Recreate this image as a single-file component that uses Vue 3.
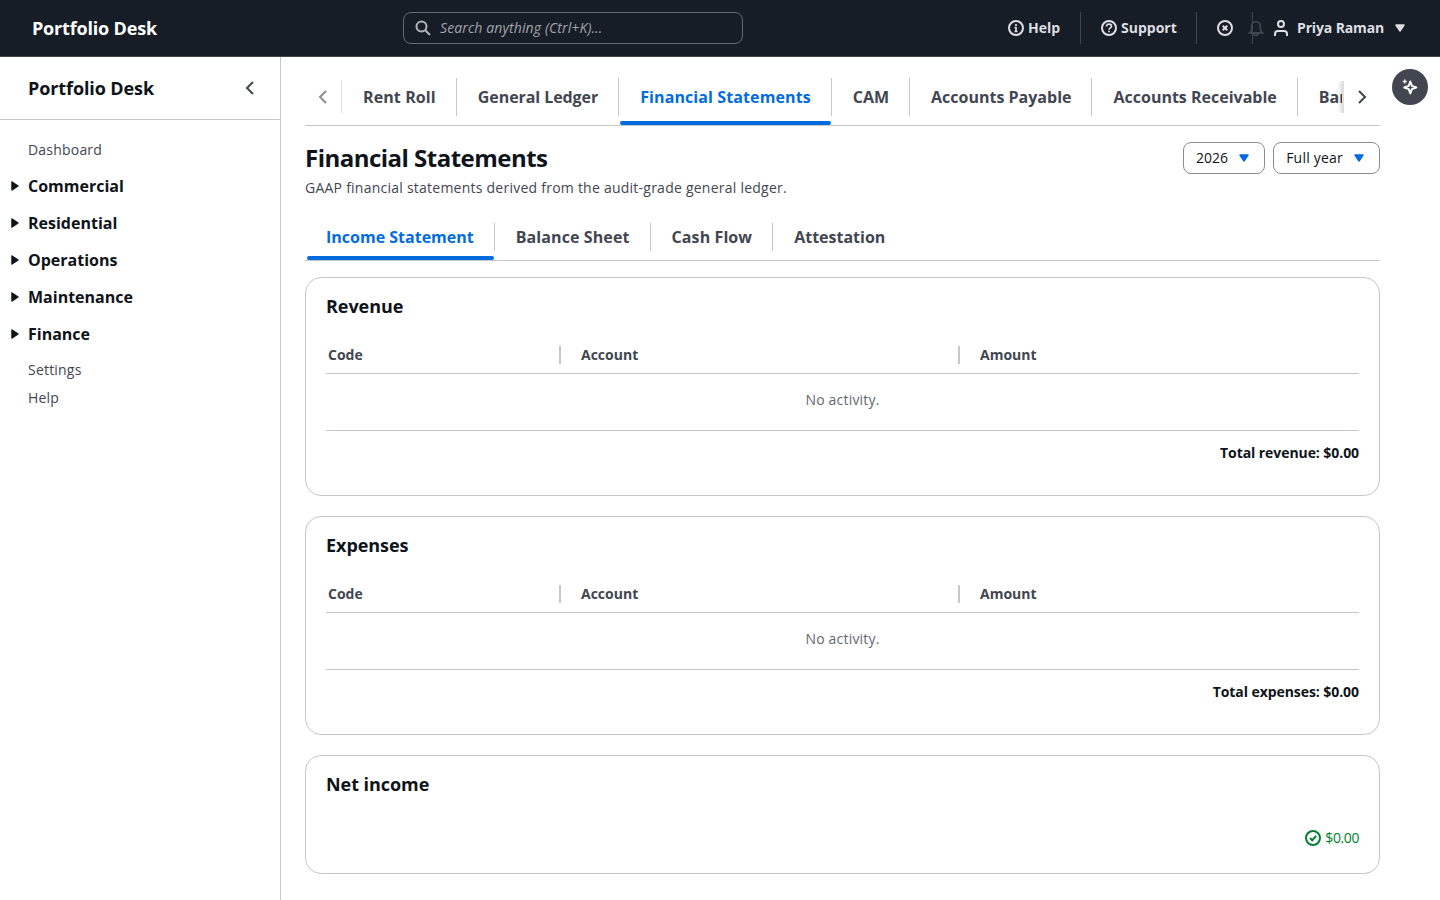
<template>
  <div class="app">
    <header class="top-nav">
      <a class="brand">Portfolio Desk</a>
      <div class="search">
        <svg class="icon" viewBox="0 0 16 16"><circle cx="6.5" cy="6.5" r="5" /><path d="m10.2 10.2 4.8 4.8" /></svg>
        <span class="placeholder">Search anything (Ctrl+K)...</span>
      </div>
      <div class="utilities">
        <div class="utility help">
          <svg class="icon" viewBox="0 0 16 16"><circle cx="8" cy="8" r="7" /><path class="glyph" d="M8 11.5V7.5H6.500M6.500 11.500h3M8 6V4" /></svg>
          <span>Help</span>
        </div>
        <div class="utility support">
          <svg class="icon" viewBox="0 0 16 16"><circle cx="8" cy="8" r="7" /><path class="glyph" d="M5.5 6.5C5.5 5 6.5 4.2 8 4.2s2.5.8 2.5 2.1C10.5 8 8 7.8 8 9.7M8 10.7v1.6" /></svg>
          <span>Support</span>
        </div>
        <div class="utility alerts">
          <svg class="icon" viewBox="0 0 16 16"><circle cx="8" cy="8" r="7" /><path d="m5.700 5.700 4.600 4.600M10.300 5.700l-4.600 4.600" /></svg>
          <svg class="icon bell" viewBox="0 0 16 16"><path d="M8 1.500a4.300 4.300 0 0 0-4.300 4.300V10l-2.200 2.800h13L12.300 10V5.800A4.300 4.300 0 0 0 8 1.500zM6 13.500a2 2 0 0 0 4 0" /></svg>
        </div>
        <div class="utility user">
          <svg class="icon" viewBox="0 0 16 16"><circle cx="8" cy="4" r="3" /><path d="M2 16v-2a3 3 0 0 1 3-3h6a3 3 0 0 1 3 3v2" /></svg>
          <span class="user-name">Priya Raman</span>
          <svg class="icon caret" viewBox="0 0 16 16"><path d="M4 5h8l-4 6z" /></svg>
        </div>
      </div>
    </header>

    <div class="body">
      <aside class="sidebar">
        <div class="sidebar-header">
          <h2>Portfolio Desk</h2>
          <svg class="icon" viewBox="0 0 16 16"><path d="M11 2 5 8l6 6" /></svg>
        </div>
        <nav>
          <template v-for="item in navItems" :key="item.label">
            <div v-if="item.section" class="nav-section">
              <svg class="icon caret" viewBox="0 0 16 16"><path d="M5 4v8l6-4z" /></svg>
              <span>{{ item.label }}</span>
            </div>
            <a v-else class="nav-link">{{ item.label }}</a>
          </template>
        </nav>
      </aside>

      <main>
        <div class="tabs-bar">
          <div class="scroll-btn left">
            <svg class="icon" viewBox="0 0 16 16"><path d="M11 2 5 8l6 6" /></svg>
          </div>
          <div class="tabs main-tabs">
            <div
              v-for="tab in tabs"
              :key="tab.label"
              class="tab"
              :class="[tab.fit, { active: tab.label === activeTab }]"
            >
              <span>{{ tab.label }}</span>
            </div>
          </div>
          <div class="scroll-btn right">
            <svg class="icon" viewBox="0 0 16 16"><path d="m5 2 6 6-6 6" /></svg>
          </div>
        </div>

        <div class="page-header">
          <div>
            <h1>Financial Statements</h1>
            <p>GAAP financial statements derived from the audit-grade general ledger.</p>
          </div>
          <div class="actions">
            <button v-for="f in filters" :key="f">
              <span>{{ f }}</span>
              <svg class="icon caret" viewBox="0 0 16 16"><path d="M4 5h8l-4 6z" /></svg>
            </button>
          </div>
        </div>

        <div class="tabs sub-tabs">
          <div
            v-for="tab in statements"
            :key="tab.label"
            class="tab"
            :class="[tab.fit, { active: tab.label === activeStatement }]"
          >
            <span>{{ tab.label }}</span>
          </div>
        </div>

        <section v-for="s in sections" :key="s.title" class="card">
          <h3>{{ s.title }}</h3>
          <table>
            <colgroup><col class="col-code" /><col class="col-account" /><col /></colgroup>
            <thead>
              <tr><th v-for="c in columns" :key="c"><div>{{ c }}</div></th></tr>
            </thead>
            <tbody>
              <tr><td colspan="3">No activity.</td></tr>
            </tbody>
          </table>
          <div class="total">{{ s.total }}</div>
        </section>

        <section class="card net">
          <h3>Net income</h3>
          <div class="status">
            <svg class="icon" viewBox="0 0 16 16"><circle cx="8" cy="8" r="7" /><path d="m5 8 2.200 2.200L11.200 5.800" /></svg>
            <span>$0.00</span>
          </div>
        </section>
      </main>

      <aside class="tools">
        <button class="assistant">
          <svg class="icon" viewBox="0 0 16 16"><path d="M8.300 2.500 9.900 6.900 14.300 8.500 9.900 10.100 8.300 14.500 6.700 10.100 2.300 8.500 6.700 6.900z" /><path class="thin" d="M2.700.5v4M.7 2.500h4" /></svg>
        </button>
      </aside>
    </div>
  </div>
</template>

<script setup>
import { ref } from 'vue'

const navItems = [
  { label: 'Dashboard' },
  { label: 'Commercial', section: true },
  { label: 'Residential', section: true },
  { label: 'Operations', section: true },
  { label: 'Maintenance', section: true },
  { label: 'Finance', section: true },
  { label: 'Settings' },
  { label: 'Help' }
]

const tabs = [
  { label: 'Rent Roll', fit: 'loose' },
  { label: 'General Ledger', fit: 'tight' },
  { label: 'Financial Statements', fit: 'loose' },
  { label: 'CAM' },
  { label: 'Accounts Payable' },
  { label: 'Accounts Receivable' },
  { label: 'Banking' }
]
const activeTab = ref('Financial Statements')

const statements = [
  { label: 'Income Statement' },
  { label: 'Balance Sheet', fit: 'loose' },
  { label: 'Cash Flow', fit: 'loose' },
  { label: 'Attestation' }
]
const activeStatement = ref('Income Statement')

const filters = ['2026', 'Full year']
const columns = ['Code', 'Account', 'Amount']
const sections = [
  { title: 'Revenue', total: 'Total revenue: $0.00' },
  { title: 'Expenses', total: 'Total expenses: $0.00' }
]
</script>

<style>
body {
  margin: 0;
  background: #fff;
}
</style>

<style scoped>
* {
  box-sizing: border-box;
}

.app {
  display: flex;
  flex-direction: column;
  height: 100vh;
  overflow: hidden;
  font-family: 'Open Sans', sans-serif;
  font-size: 14px;
  line-height: 20px;
  color: #0f141a;
}

h1, h2, h3, p {
  margin: 0;
}

.icon {
  display: block;
  flex: none;
  width: 16px;
  height: 16px;
  fill: none;
  stroke: currentColor;
  stroke-width: 2;
  overflow: visible;
}

.icon.caret {
  fill: currentColor;
  stroke-width: 1.5;
  stroke-linejoin: round;
}

.icon .glyph {
  stroke-width: 1.7;
}

/* Top navigation */
.top-nav {
  display: flex;
  align-items: center;
  flex: none;
  height: 57px;
  padding-left: 32px;
  background: #161d26;
  border-bottom: 1px solid #424650;
  color: #dedee3;
}

.brand {
  width: 371px;
  font-size: 18px;
  font-weight: 700;
  letter-spacing: -0.18px;
  color: #fff;
}

.search {
  display: flex;
  align-items: center;
  gap: 9px;
  width: 340px;
  height: 32px;
  padding: 0 11px;
  border: 1px solid #656871;
  border-radius: 8px;
}

.search .icon {
  color: #b4b4bb;
}

.placeholder {
  font-style: italic;
  letter-spacing: 0.11px;
  color: #a4a4ad;
}

.utilities {
  display: flex;
  margin-left: auto;
}

.utility {
  display: flex;
  align-items: center;
  height: 32px;
  font-weight: 700;
}

.utility > span {
  margin-left: 4px;
}

.help,
.support,
.alerts {
  border-right: 1px solid #424650;
}

.help {
  width: 73px;
}

.support {
  width: 116px;
  padding-left: 20px;
}

.alerts {
  width: 56px;
  padding-left: 20px;
}

.bell {
  margin-left: 15px;
  stroke-width: 1.7;
  color: #424650;
}

.user {
  width: 187px;
  padding-left: 20px;
}

.user .user-name {
  margin: 0 8px;
  letter-spacing: -0.14px;
}

/* Side navigation */
.body {
  display: flex;
  flex: 1;
  min-height: 0;
}

.sidebar {
  flex: none;
  width: 281px;
  border-right: 1px solid #c6c6cd;
}

.sidebar-header {
  display: flex;
  justify-content: space-between;
  align-items: center;
  height: 63px;
  padding: 0 22px 0 28px;
  border-bottom: 1px solid #c6c6cd;
}

.sidebar-header h2 {
  font-size: 18px;
  letter-spacing: -0.1px;
}

.sidebar-header .icon,
.scroll-btn {
  color: #424650;
}

nav {
  padding-top: 16px;
}

.nav-link {
  display: block;
  height: 28px;
  padding: 4px 0 4px 28px;
  letter-spacing: 0.2px;
  color: #424650;
}

.nav-section {
  display: flex;
  align-items: center;
  height: 37px;
  padding-left: 7px;
  font-size: 16px;
  font-weight: 700;
}

.nav-link + .nav-section {
  margin-top: 3px;
}

.nav-section + .nav-link {
  margin-top: 4px;
}

.nav-section span {
  margin-left: 5px;
}

/* Content */
main {
  flex: none;
  width: 1075px;
  margin-left: 24px;
}

.tabs-bar {
  display: flex;
  align-items: center;
  height: 69px;
  padding-top: 12px;
  border-bottom: 1px solid #c6c6cd;
}

.scroll-btn {
  display: flex;
  align-items: center;
  justify-content: center;
  flex: none;
  width: 37px;
  height: 32px;
}

.scroll-btn.left {
  border-right: 1px solid #dedee3;
}

.scroll-btn.left .icon {
  color: #8c8c94;
}

/* shadow falls only over the clipped tabs */
.scroll-btn.right {
  position: relative;
  z-index: 1;
  box-shadow: -1px 0 0 0 #dedee3, -2px 0 5px 0 rgba(0, 7, 22, 0.18);
  border-left: 1px solid #dedee3;
  clip-path: inset(0 0 0 -8px);
}

.tabs {
  display: flex;
}

.tab {
  display: flex;
  flex: none;
  position: relative;
  font-size: 16px;
  font-weight: 700;
  color: #424650;
}

.tab.loose {
  letter-spacing: 0.1px;
}

.tab.tight {
  letter-spacing: -0.07px;
}

.tab span {
  padding: 0 20px 0 21px;
  border-right: 1px solid #c6c6cd;
}

.tab:last-child span {
  border-right: 0;
}

.tab.active {
  color: #006ce0;
}

.tab.active::after {
  content: '';
  position: absolute;
  left: 1px;
  right: 1px;
  bottom: 0;
  height: 4px;
  border-radius: 2px;
  background: #006ce0;
}

.sub-tabs .tab.active::after {
  left: 2px;
}

.main-tabs {
  flex: 1;
  min-width: 0;
  height: 56px;
  overflow: hidden;
}

.main-tabs .tab {
  padding: 9px 0;
}

.main-tabs .tab span {
  line-height: 38px;
}

.page-header {
  display: flex;
  justify-content: space-between;
  padding-top: 16px;
}

h1 {
  font-size: 24px;
  line-height: 32px;
  letter-spacing: -0.52px;
}

.page-header p {
  margin-top: 4px;
  letter-spacing: 0.24px;
  color: #424650;
}

.actions {
  display: flex;
  gap: 8px;
}

.actions button {
  display: flex;
  align-items: center;
  gap: 8px;
  height: 32px;
  padding: 0 12px;
  border: 1px solid #8c8c94;
  border-radius: 8px;
  background: #fff;
  font: inherit;
  color: #0f141a;
}

.actions button:last-child span {
  letter-spacing: 0.22px;
}

.actions .caret {
  color: #006ce0;
}

.sub-tabs {
  height: 49px;
  margin-top: 14px;
  border-bottom: 1px solid #c6c6cd;
}

.sub-tabs .tab {
  padding: 11px 0 9px;
}

.sub-tabs .tab span {
  line-height: 28px;
}

.card {
  height: 219px;
  margin: 16px 0 20px;
  padding: 16px 20px;
  border: 1px solid #c6c6cd;
  border-radius: 16px;
}

.card + .card {
  margin-top: 20px;
}

.card h3 {
  font-size: 18px;
  line-height: 24px;
  letter-spacing: -0.05px;
}

table {
  width: 100%;
  margin-top: 18px;
  border-collapse: collapse;
  table-layout: fixed;
}

.col-code {
  width: 235px;
}

.col-account {
  width: 399px;
}

th {
  height: 37px;
  padding: 10px 0 0;
  border-bottom: 1px solid #c6c6cd;
  text-align: left;
  vertical-align: top;
  color: #424650;
}

th div {
  padding-left: 20px;
  line-height: 18px;
  border-right: 2px solid #c6c6cd;
}

th:first-child div {
  padding-left: 2px;
}

th:last-child div {
  border-right: 0;
}

td {
  height: 57px;
  padding: 0 0 3px;
  border-bottom: 1px solid #c6c6cd;
  text-align: center;
  letter-spacing: 0.2px;
  color: #656871;
}

.total {
  margin-top: 12px;
  font-weight: 700;
  letter-spacing: -0.07px;
  text-align: right;
}

.card.net {
  height: 119px;
}

.status {
  display: flex;
  align-items: center;
  justify-content: flex-end;
  gap: 4px;
  margin-top: 32px;
  color: #00802f;
}

.status span {
  letter-spacing: -0.4px;
}

.tools {
  padding: 12px;
}

.assistant {
  display: flex;
  align-items: center;
  justify-content: center;
  width: 36px;
  height: 36px;
  padding: 0;
  border: 0;
  border-radius: 50%;
  background: #424650;
  color: #fff;
}

.assistant .icon {
  stroke-linejoin: round;
}

.assistant .thin {
  stroke-width: 1.3;
}
</style>
